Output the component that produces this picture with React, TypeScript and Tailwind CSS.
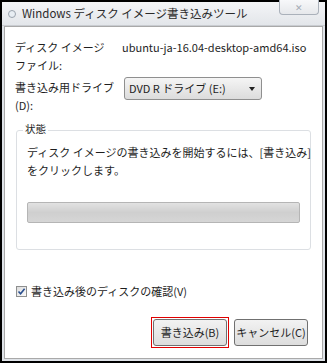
import { useState } from 'react';

const font = { fontFamily: '"Noto Sans CJK JP", "Noto Sans", sans-serif' };

export default function App() {
  const [verify, setVerify] = useState(true);

  return (
    <div
      className="w-[327px] h-[363px] border-2 border-black bg-[#dfe3e8] flex flex-col text-[11px] text-[#1e1e1e] leading-none whitespace-nowrap"
      style={font}
    >
      {/* Title bar */}
      <div className="h-[24px] flex items-center justify-between bg-gradient-to-b from-[#f4f5f7] to-[#e3e6ea] border-b border-[#c9ccd1] pl-[6px] pr-[6px]">
        <div className="flex items-center gap-[6px]">
          <div className="w-[8px] h-[8px] rounded-full border border-[#9aa3ad] bg-[#e8eef3]" />
          <span className="text-[11.5px] text-[#2a2a2a]">Windows ディスク イメージ書き込みツール</span>
        </div>
        <div className="self-start -mt-[2px] w-[40px] h-[15px] border border-t-0 border-[#aab1ba] rounded-b-[4px] bg-gradient-to-b from-[#f7f8fa] to-[#e6e8eb] flex items-center justify-center text-[9px] text-[#a4acb6]">
          ✕
        </div>
      </div>

      {/* Client area */}
      <div className="flex-1 mx-[2px] mb-[2px] bg-white border border-[#a9a9a9] flex flex-col px-[10px] pt-[11px]">
        <div className="flex">
          <div className="w-[107px] shrink-0 leading-[18px]">
            <div>ディスク イメージ</div>
            <div>ファイル:</div>
          </div>
          <div className="leading-[18px]">ubuntu-ja-16.04-desktop-amd64.iso</div>
        </div>

        <div className="flex mt-[4px]">
          <div className="w-[109px] shrink-0 leading-[18px]">
            <div>書き込み用ドライブ</div>
            <div>(D):</div>
          </div>
          <div className="mt-[-1px] w-[138px] h-[23px] rounded-[3px] border border-[#8f8f8f] bg-gradient-to-b from-[#f5f5f5] to-[#dcdcdc] flex items-center justify-between pl-[4px] pr-[6px]">
            <span>DVD R ドライブ (E:)</span>
            <span className="w-0 h-0 border-l-[3px] border-r-[3px] border-t-[4px] border-l-transparent border-r-transparent border-t-[#222]" />
          </div>
        </div>

        {/* Status group */}
        <div className="relative mt-[16px] h-[120px] mx-[1px] border border-[#dcdfe3] rounded-[3px] px-[10px] pt-[12px]">
          <span className="absolute -top-[7px] left-[6px] bg-white px-[2px] text-[10.5px]">状態</span>
          <div className="leading-[18px]">
            <div>ディスク イメージの書き込みを開始するには、[書き込み]</div>
            <div>をクリックします。</div>
          </div>
          <div className="mt-[23px] h-[21px] rounded-[2px] border border-[#b5b5b5] bg-gradient-to-b from-[#e2e2e2] via-[#cfcfcf] to-[#d6d6d6]" />
        </div>

        <label className="flex items-center gap-[4px] mt-[36px] ml-[1px]">
          <span
            onClick={() => setVerify(!verify)}
            className="w-[11px] h-[11px] border border-[#8e8f8f] bg-gradient-to-br from-[#dcdcdc] to-[#fbfbfb] flex items-center justify-center"
          >
            {verify && (
              <svg width="9" height="9" viewBox="0 0 9 9">
                <path d="M1.5 4.5 L3.6 6.8 L7.6 1.8" fill="none" stroke="#2a4f8f" strokeWidth="1.6" />
              </svg>
            )}
          </span>
          <span>書き込み後のディスクの確認(V)</span>
        </label>

        <div className="flex justify-end gap-[5px] mt-[20px] mr-[4px]">
          <div className="border border-[#e00000] p-[1px]">
            <button className="w-[74px] h-[27px] rounded-[3px] border border-[#707070] bg-gradient-to-b from-[#f2f2f2] to-[#dddddd]">
              書き込み(B)
            </button>
          </div>
          <button className="mt-[2px] w-[74px] h-[27px] rounded-[3px] border border-[#707070] bg-gradient-to-b from-[#f2f2f2] to-[#dddddd]">
            キャンセル(C)
          </button>
        </div>
      </div>
    </div>
  );
}
